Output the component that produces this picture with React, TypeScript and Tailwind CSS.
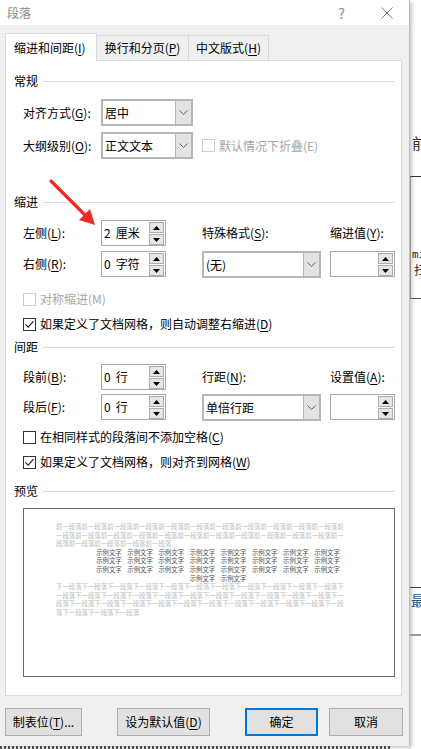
import type { ReactNode } from 'react'

const FONT = "font-['Noto_Sans_CJK_SC','Noto_Sans',sans-serif]"

function Acc({ text, k, tail = '):' }: { text: string; k: string; tail?: string }) {
  return (
    <>
      {text}(<span className="underline underline-offset-[2px]">{k}</span>
      {tail}
    </>
  )
}

function SpinBtn({ up }: { up?: boolean }) {
  return (
    <div className="h-[11px] border border-[#adadad] bg-[#e6e6e6] flex items-center justify-center">
      <svg width="7" height="4" viewBox="0 0 7 4">
        {up ? <path d="M0 4 L3.5 0 L7 4 Z" fill="#000" /> : <path d="M0 0 L3.5 4 L7 0 Z" fill="#000" />}
      </svg>
    </div>
  )
}

function Spinner({ num, unit }: { num?: string; unit?: string }) {
  return (
    <div className="w-[65px] h-[26px] border border-[#a9a9a9] bg-white flex shrink-0">
      <div className="flex-1 pl-[2px] flex items-center gap-[5px] text-[12px] leading-none">
        {num && <span>{num}</span>}
        {unit && <span>{unit}</span>}
      </div>
      <div className="w-[15px] mr-[1px] mt-[1px] flex flex-col gap-[1px]">
        <SpinBtn up />
        <SpinBtn />
      </div>
    </div>
  )
}

function Select({ value, className }: { value: string; className: string }) {
  return (
    <div className={`h-[27px] border-2 border-[#b6b6b6] bg-white flex shrink-0 ${className}`}>
      <div className="flex-1 pl-[2px] flex items-center text-[12px] leading-none">{value}</div>
      <div className="w-[16px] border-l border-[#b6b6b6] bg-[#e3e3e3] flex items-center justify-center">
        <svg width="9" height="5" viewBox="0 0 9 5">
          <path d="M0.5 0.5 L4.5 4.5 L8.5 0.5" fill="none" stroke="#606060" strokeWidth="1" />
        </svg>
      </div>
    </div>
  )
}

function CheckBox({ checked, disabled }: { checked?: boolean; disabled?: boolean }) {
  return (
    <div
      className={`w-[13px] h-[13px] border bg-white flex items-center justify-center shrink-0 ${
        disabled ? 'border-[#cccccc]' : 'border-[#333333]'
      }`}
    >
      {checked && (
        <svg width="11" height="11" viewBox="0 0 11 11">
          <path d="M1.5 5.5 L4.2 8.2 L9.5 2.2" fill="none" stroke="#222" strokeWidth="1.1" />
        </svg>
      )}
    </div>
  )
}

function CheckRow({ checked, disabled, className, children }: { checked?: boolean; disabled?: boolean; className: string; children: ReactNode }) {
  return (
    <div className={`h-[16px] flex items-center pl-[9px] ${className}`}>
      <CheckBox checked={checked} disabled={disabled} />
      <span className={`ml-[4px] text-[12px] leading-none whitespace-nowrap ${disabled ? 'text-[#a6a6a6]' : 'text-black'}`}>
        {children}
      </span>
    </div>
  )
}

function Group({ title, className }: { title: string; className: string }) {
  return (
    <div className={`h-[16px] flex items-center ${className}`}>
      <span className="text-[12px] leading-none">{title}</span>
      <div className="flex-1 h-px bg-[#dcdcdc] ml-[5px] mr-[1px]" />
    </div>
  )
}

function RowLabel({ children }: { children: ReactNode }) {
  return <div className="w-[87px] pl-[9px] text-[12px] leading-none whitespace-nowrap shrink-0">{children}</div>
}

const before = ['前一段落'.repeat(11) + '前', '一段落前'.repeat(11) + '一', '段落前一'.repeat(4) + '段落']
const after = ['下一段落'.repeat(11) + '下', '一段落下'.repeat(11) + '一', '段落下一'.repeat(11) + '段', '落下一段落下一段落下一段落']
const sample = [8, 8, 8, 2]

function Preview() {
  return (
    <div className="mt-[9px] ml-[9px] w-[372px] h-[169px] border border-[#6a6a6a] bg-white pt-[14px] pl-[32px] text-[6.4px] leading-[8.6px]">
      {before.map((l, i) => (
        <div key={'b' + i} className="whitespace-nowrap text-[#bdbdbd]">{l}</div>
      ))}
      {sample.map((n, i) => (
        <div key={'s' + i} className="ml-[40px] w-[244px] flex justify-center gap-x-[5.6px] whitespace-nowrap text-[#505050]">
          {Array.from({ length: n }).map((_, j) => (
            <span key={j}>示例文字</span>
          ))}
        </div>
      ))}
      {after.map((l, i) => (
        <div key={'a' + i} className="whitespace-nowrap text-[#bdbdbd]">{l}</div>
      ))}
    </div>
  )
}

function Panel() {
  return (
    <div className="ml-[5px] w-[397px] h-[636px] border border-[#d9d9d9] bg-white flex flex-col pl-[8px] pr-[5px]">
      <Group title="常规" className="mt-[12px]" />
      <div className="mt-[10px] h-[27px] flex items-center">
        <RowLabel><Acc text="对齐方式" k="G" /></RowLabel>
        <Select value="居中" className="w-[92px]" />
      </div>
      <div className="mt-[6px] h-[27px] flex items-center">
        <RowLabel><Acc text="大纲级别" k="O" /></RowLabel>
        <Select value="正文文本" className="w-[92px]" />
        <div className="ml-[9px] flex items-center">
          <CheckBox disabled />
          <span className="ml-[4px] text-[12px] leading-none text-[#a6a6a6] whitespace-nowrap">默认情况下折叠(E)</span>
        </div>
      </div>

      <Group title="缩进" className="mt-[35px]" />
      <div className="mt-[10px] h-[26px] flex items-center">
        <RowLabel><Acc text="左侧" k="L" /></RowLabel>
        <Spinner num="2" unit="厘米" />
        <div className="ml-[36px] w-[128px] text-[12px] leading-none whitespace-nowrap"><Acc text="特殊格式" k="S" /></div>
        <div className="text-[12px] leading-none whitespace-nowrap"><Acc text="缩进值" k="Y" /></div>
      </div>
      <div className="mt-[5px] h-[26px] flex items-start">
        <div className="h-[26px] flex items-center"><RowLabel><Acc text="右侧" k="R" /></RowLabel></div>
        <Spinner num="0" unit="字符" />
        <Select value="(无)" className="ml-[36px] w-[119px]" />
        <div className="ml-[9px]"><Spinner /></div>
      </div>
      <CheckRow disabled className="mt-[14px]">对称缩进(M)</CheckRow>
      <CheckRow checked className="mt-[9px]">
        如果定义了文档网格，则自动调整右缩进(<span className="underline underline-offset-[2px]">D</span>)
      </CheckRow>

      <Group title="间距" className="mt-[7px]" />
      <div className="mt-[9px] h-[26px] flex items-center">
        <RowLabel><Acc text="段前" k="B" /></RowLabel>
        <Spinner num="0" unit="行" />
        <div className="ml-[36px] w-[128px] text-[12px] leading-none whitespace-nowrap"><Acc text="行距" k="N" /></div>
        <div className="text-[12px] leading-none whitespace-nowrap"><Acc text="设置值" k="A" /></div>
      </div>
      <div className="mt-[4px] h-[26px] flex items-start">
        <div className="h-[26px] flex items-center"><RowLabel><Acc text="段后" k="F" /></RowLabel></div>
        <Spinner num="0" unit="行" />
        <Select value="单倍行距" className="ml-[36px] w-[119px]" />
        <div className="ml-[9px]"><Spinner /></div>
      </div>
      <CheckRow className="mt-[9px]">
        在相同样式的段落间不添加空格(<span className="underline underline-offset-[2px]">C</span>)
      </CheckRow>
      <CheckRow checked className="mt-[9px]">
        如果定义了文档网格，则对齐到网格(<span className="underline underline-offset-[2px]">W</span>)
      </CheckRow>

      <Group title="预览" className="mt-[13px]" />
      <Preview />
    </div>
  )
}

function Button({ children, className }: { children: ReactNode; className: string }) {
  return (
    <div className={`h-[28px] bg-[#e1e1e1] flex items-center justify-center text-[12px] leading-none whitespace-nowrap ${className}`}>
      {children}
    </div>
  )
}

function Dialog() {
  return (
    <div className="w-[410px] h-[746px] bg-[#f0f0f0] border-r border-[#bcbcbc] shadow-[2px_2px_4px_rgba(0,0,0,0.22)] flex flex-col shrink-0">
      <div className="h-[25px] bg-white flex items-center">
        <span className="pl-[7px] text-[12px] leading-none text-[#8c8c8c]">段落</span>
        <span className="ml-auto text-[14px] leading-none text-[#8c8c8c]">?</span>
        <svg className="ml-[36px] mr-[16px]" width="12" height="12" viewBox="0 0 12 12">
          <path d="M0.5 0.5 L11.5 11.5 M11.5 0.5 L0.5 11.5" stroke="#7a7a7a" strokeWidth="1" />
        </svg>
      </div>
      <div className="mt-[9px] h-[27px] flex items-end pl-[5px] -mb-px">
        <div className="relative z-10 w-[92px] h-[28px] bg-white border border-b-0 border-[#d9d9d9] flex items-center pl-[8px] text-[12px] leading-none">
          缩进和间距(<span className="underline underline-offset-[2px]">I</span>)
        </div>
        <div className="w-[92px] h-[26px] border border-l-0 border-[#d9d9d9] flex items-center justify-center text-[12px] leading-none">
          换行和分页(<span className="underline underline-offset-[2px]">P</span>)
        </div>
        <div className="w-[80px] h-[26px] border border-l-0 border-[#d9d9d9] flex items-center justify-center text-[12px] leading-none">
          中文版式(<span className="underline underline-offset-[2px]">H</span>)
        </div>
      </div>
      <Panel />
      <div className="mt-[12px] flex">
        <Button className="ml-[5px] w-[77px] border border-[#adadad]">
          制表位(<span className="underline underline-offset-[2px]">T</span>)...
        </Button>
        <Button className="ml-[35px] w-[93px] border border-[#adadad]">
          设为默认值(<span className="underline underline-offset-[2px]">D</span>)
        </Button>
        <Button className="ml-[35px] w-[73px] border-2 border-[#0078d7]">确定</Button>
        <Button className="ml-[11px] w-[74px] border border-[#adadad]">取消</Button>
      </div>
    </div>
  )
}

function DocStrip() {
  return (
    <div className="w-[11px] h-[746px] overflow-hidden flex flex-col shrink-0">
      <div className="mt-[134px] h-[18px] pl-[2px] text-[15px] leading-[18px] text-[#333] whitespace-nowrap">前/</div>
      <div className="mt-[24px] h-[123px] border-t border-b border-l border-t-[#333] border-b-[#555] border-l-[#9a9a9a] flex flex-col">
        <div className="mt-[72px] pl-[1px] font-['Liberation_Mono',monospace] text-[11px] leading-[12px] text-[#222] whitespace-nowrap">mi</div>
        <div className="mt-[2px] pl-[3px] text-[12px] leading-[13px] text-[#222] whitespace-nowrap">扫</div>
      </div>
      <div className="mt-[288px] border-t border-[#444]" />
      <div className="mt-[4px] pl-[1px] text-[14px] leading-[16px] text-[#2a4f8f] whitespace-nowrap">最</div>
      <div className="mt-[26px] h-[2px] bg-[#9a9a9a]" />
    </div>
  )
}

export default function App() {
  return (
    <div className={`relative w-[421px] h-[749px] bg-white overflow-hidden text-black ${FONT}`}>
      <div className="flex">
        <Dialog />
        <DocStrip />
      </div>
      <div className="w-[392px] h-[3px] bg-[repeating-linear-gradient(90deg,#555_0px,#555_2px,transparent_2px,transparent_4px)]" />
      <svg className="absolute left-0 top-0 pointer-events-none" width="421" height="749" viewBox="0 0 421 749">
        <path d="M51 181 L86 216" stroke="#ee2a2a" strokeWidth="3.2" strokeLinecap="round" />
        <polygon points="95,225 79,220 90,209" fill="#ee2a2a" />
      </svg>
    </div>
  )
}
